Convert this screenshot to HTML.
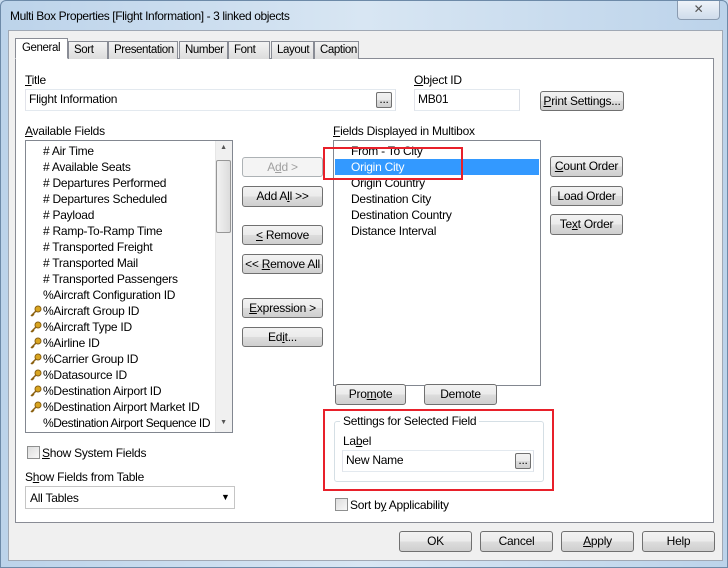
<!DOCTYPE html>
<html><head><style>
*{box-sizing:border-box;margin:0;padding:0}
body{width:728px;height:568px;overflow:hidden;background:#c9dcef;font-family:"Liberation Sans",sans-serif;font-size:12px;letter-spacing:-0.25px;color:#000;position:relative}
.a{position:absolute}
.btn{position:absolute;border:1px solid #707070;border-radius:3px;background:linear-gradient(#f2f2f2 0%,#ebebeb 50%,#dddddd 51%,#cfcfcf 100%);text-align:center;font-size:12px;line-height:18px}
.dis{color:#a0a0a0;border-color:#adb2b5;background:#f4f4f4}
.inp{position:absolute;background:#fff;border:1px solid #abadb3;border-top-color:#e3e9ef;border-left-color:#e2e3ea;border-right-color:#dbdfe6;border-bottom-color:#e3e9ef}
.lst{position:absolute;background:#fff;border:1px solid #828790}
.it{position:absolute;left:0;height:16px;line-height:16px;white-space:nowrap}
.tab{position:absolute;top:41px;height:18px;border:1px solid #898c95;border-bottom:none;background:linear-gradient(#f3f3f3,#dcdcdc);line-height:16px;padding:0 0 0 5px;font-size:11.5px;letter-spacing:-0.4px;overflow:hidden;white-space:nowrap}
u{text-decoration:underline}
.key{position:absolute;left:4px;width:12px;height:12px}
.red{position:absolute;border:2px solid #e8202a}
</style></head><body>
<div class="a" style="left:0;top:0;width:728px;height:568px;background:linear-gradient(90deg,#bcd3ea,#d8e6f3 50%,#bcd3ea);border:1px solid #6d8aa8;border-radius:6px 6px 0 0"></div>
<div class="a" style="left:10px;top:9px;font-size:12px;letter-spacing:-0.4px">Multi Box Properties [Flight Information] - 3 linked objects</div>
<div class="a" style="left:677px;top:1px;width:43px;height:19px;border:1px solid #8a9bb0;border-top:none;border-radius:0 0 4px 4px;background:linear-gradient(#eef3f9,#cfdceb);text-align:center;line-height:17px;color:#555;font-size:12px">✕</div>
<div class="a" style="left:8px;top:30px;width:715px;height:531px;background:#f0f0f0;border:1px solid #a0a8b4"></div>
<div class="a" style="left:15px;top:58px;width:699px;height:465px;background:#fff;border:1px solid #898c95"></div>
<div class="tab" style="left:15px;top:38px;width:53px;height:21px;background:#fff;border-bottom:1px solid #fff;padding-left:6px;line-height:18px">General</div>
<div class="tab" style="left:68px;width:40px">Sort</div>
<div class="tab" style="left:108px;width:70px">Presentation</div>
<div class="tab" style="left:179px;width:49px">Number</div>
<div class="tab" style="left:228px;width:42px">Font</div>
<div class="tab" style="left:271px;width:43px">Layout</div>
<div class="tab" style="left:314px;width:45px">Caption</div>

<div class="a" style="left:25px;top:73px"><u>T</u>itle</div>
<div class="inp" style="left:25px;top:89px;width:371px;height:22px"><span class="a" style="left:3px;top:2px">Flight Information</span></div>
<div class="btn" style="left:376px;top:92px;width:16px;height:16px;line-height:12px;border-radius:2px">...</div>
<div class="a" style="left:414px;top:73px"><u>O</u>bject ID</div>
<div class="inp" style="left:414px;top:89px;width:106px;height:22px"><span class="a" style="left:3px;top:2px">MB01</span></div>
<div class="btn" style="left:540px;top:91px;width:84px;height:20px"><u>P</u>rint Settings...</div>

<div class="a" style="left:25px;top:124px"><u>A</u>vailable Fields</div>
<div class="lst" style="left:25px;top:140px;width:208px;height:293px;overflow:hidden">
<div style="position:absolute;left:0;top:2px;width:190px;overflow:hidden;height:289px">
<div class="it" style="top:0"><span style="padding-left:17px"># Air Time</span></div>
<div class="it" style="top:16px"><span style="padding-left:17px"># Available Seats</span></div>
<div class="it" style="top:32px"><span style="padding-left:17px"># Departures Performed</span></div>
<div class="it" style="top:48px"><span style="padding-left:17px"># Departures Scheduled</span></div>
<div class="it" style="top:64px"><span style="padding-left:17px"># Payload</span></div>
<div class="it" style="top:80px"><span style="padding-left:17px"># Ramp-To-Ramp Time</span></div>
<div class="it" style="top:96px"><span style="padding-left:17px"># Transported Freight</span></div>
<div class="it" style="top:112px"><span style="padding-left:17px"># Transported Mail</span></div>
<div class="it" style="top:128px"><span style="padding-left:17px"># Transported Passengers</span></div>
<div class="it" style="top:144px"><span style="padding-left:17px">%Aircraft Configuration ID</span></div>
<div class="it" style="top:160px"><svg class="key" style="top:2px" viewBox="0 0 12 12"><circle cx="8" cy="4" r="3" fill="#d9a520" stroke="#8a6010"/><path d="M6 6L1 11M2 10l1 1M3 9l1 1" stroke="#8a6010" stroke-width="1.5"/></svg><span style="padding-left:17px">%Aircraft Group ID</span></div>
<div class="it" style="top:176px"><svg class="key" style="top:2px" viewBox="0 0 12 12"><circle cx="8" cy="4" r="3" fill="#d9a520" stroke="#8a6010"/><path d="M6 6L1 11M2 10l1 1M3 9l1 1" stroke="#8a6010" stroke-width="1.5"/></svg><span style="padding-left:17px">%Aircraft Type ID</span></div>
<div class="it" style="top:192px"><svg class="key" style="top:2px" viewBox="0 0 12 12"><circle cx="8" cy="4" r="3" fill="#d9a520" stroke="#8a6010"/><path d="M6 6L1 11M2 10l1 1M3 9l1 1" stroke="#8a6010" stroke-width="1.5"/></svg><span style="padding-left:17px">%Airline ID</span></div>
<div class="it" style="top:208px"><svg class="key" style="top:2px" viewBox="0 0 12 12"><circle cx="8" cy="4" r="3" fill="#d9a520" stroke="#8a6010"/><path d="M6 6L1 11M2 10l1 1M3 9l1 1" stroke="#8a6010" stroke-width="1.5"/></svg><span style="padding-left:17px">%Carrier Group ID</span></div>
<div class="it" style="top:224px"><svg class="key" style="top:2px" viewBox="0 0 12 12"><circle cx="8" cy="4" r="3" fill="#d9a520" stroke="#8a6010"/><path d="M6 6L1 11M2 10l1 1M3 9l1 1" stroke="#8a6010" stroke-width="1.5"/></svg><span style="padding-left:17px">%Datasource ID</span></div>
<div class="it" style="top:240px"><svg class="key" style="top:2px" viewBox="0 0 12 12"><circle cx="8" cy="4" r="3" fill="#d9a520" stroke="#8a6010"/><path d="M6 6L1 11M2 10l1 1M3 9l1 1" stroke="#8a6010" stroke-width="1.5"/></svg><span style="padding-left:17px">%Destination Airport ID</span></div>
<div class="it" style="top:256px"><svg class="key" style="top:2px" viewBox="0 0 12 12"><circle cx="8" cy="4" r="3" fill="#d9a520" stroke="#8a6010"/><path d="M6 6L1 11M2 10l1 1M3 9l1 1" stroke="#8a6010" stroke-width="1.5"/></svg><span style="padding-left:17px">%Destination Airport Market ID</span></div>
<div class="it" style="top:272px"><span style="padding-left:17px;letter-spacing:-0.45px">%Destination Airport Sequence ID</span></div>
</div>
<div class="a" style="left:189px;top:0;width:17px;height:291px;background:#f0f0f0;border-left:1px solid #e6e6e6"></div>
<div class="a" style="left:191px;top:3px;width:13px;text-align:center;font-size:7px;color:#555">▲</div>
<div class="a" style="left:190px;top:19px;width:15px;height:73px;border:1px solid #969696;border-radius:2px;background:linear-gradient(90deg,#f2f2f2,#dcdcdc)"></div>
<div class="a" style="left:191px;top:278px;width:13px;text-align:center;font-size:7px;color:#555">▼</div>
</div>

<div class="a" style="left:27px;top:446px;width:13px;height:13px;border:1px solid #8e8f8f;background:linear-gradient(135deg,#ddd,#f8f8f8)"></div>
<div class="a" style="left:42px;top:446px"><u>S</u>how System Fields</div>
<div class="a" style="left:25px;top:470px">S<u>h</u>ow Fields from Table</div>
<div class="inp" style="left:25px;top:486px;width:210px;height:23px;border-color:#c5c5c5"><span class="a" style="left:4px;top:4px">All Tables</span><span class="a" style="left:195px;top:5px;font-size:9px">▼</span></div>

<div class="btn dis" style="left:242px;top:157px;width:81px;height:20px">A<u>d</u>d &gt;</div>
<div class="btn" style="left:242px;top:186px;width:81px;height:21px">Add A<u>l</u>l &gt;&gt;</div>
<div class="btn" style="left:242px;top:225px;width:81px;height:20px"><u>&lt;</u> Remove</div>
<div class="btn" style="left:242px;top:254px;width:81px;height:20px">&lt;&lt; <u>R</u>emove All</div>
<div class="btn" style="left:242px;top:298px;width:81px;height:20px"><u>E</u>xpression &gt;</div>
<div class="btn" style="left:242px;top:327px;width:81px;height:20px">Ed<u>i</u>t...</div>

<div class="a" style="left:333px;top:124px"><u>F</u>ields Displayed in Multibox</div>
<div class="lst" style="left:333px;top:140px;width:208px;height:246px">
<div class="it" style="top:2px;left:17px">From - To City</div>
<div class="it" style="top:18px;left:1px;width:204px;background:#3399ff;color:#fff;padding-left:16px">Origin City</div>
<div class="it" style="top:34px;left:17px">Origin Country</div>
<div class="it" style="top:50px;left:17px">Destination City</div>
<div class="it" style="top:66px;left:17px">Destination Country</div>
<div class="it" style="top:82px;left:17px">Distance Interval</div>
</div>
<div class="red" style="left:323px;top:147px;width:140px;height:33px"></div>

<div class="btn" style="left:550px;top:156px;width:73px;height:21px"><u>C</u>ount Order</div>
<div class="btn" style="left:550px;top:186px;width:73px;height:20px">Load Order</div>
<div class="btn" style="left:550px;top:214px;width:73px;height:21px">Te<u>x</u>t Order</div>

<div class="btn" style="left:335px;top:384px;width:71px;height:21px">Pro<u>m</u>ote</div>
<div class="btn" style="left:424px;top:384px;width:73px;height:21px">Demote</div>

<div class="a" style="left:334px;top:421px;width:210px;height:61px;border:1px solid #d5dfe5;border-radius:3px"></div>
<div class="a" style="left:340px;top:414px;background:#fff;padding:0 3px">Settings for Selected Field</div>
<div class="a" style="left:343px;top:434px">La<u>b</u>el</div>
<div class="inp" style="left:342px;top:450px;width:192px;height:22px"><span class="a" style="left:3px;top:2px">New Name</span></div>
<div class="btn" style="left:515px;top:453px;width:16px;height:16px;line-height:12px;border-radius:2px">...</div>
<div class="red" style="left:323px;top:409px;width:231px;height:82px"></div>

<div class="a" style="left:335px;top:498px;width:13px;height:13px;border:1px solid #8e8f8f;background:linear-gradient(135deg,#ddd,#f8f8f8)"></div>
<div class="a" style="left:350px;top:498px">Sort b<u>y</u> Applicability</div>

<div class="btn" style="left:399px;top:531px;width:73px;height:21px">OK</div>
<div class="btn" style="left:480px;top:531px;width:73px;height:21px">Cancel</div>
<div class="btn" style="left:561px;top:531px;width:73px;height:21px"><u>A</u>pply</div>
<div class="btn" style="left:642px;top:531px;width:73px;height:21px">Help</div>
</body></html>
